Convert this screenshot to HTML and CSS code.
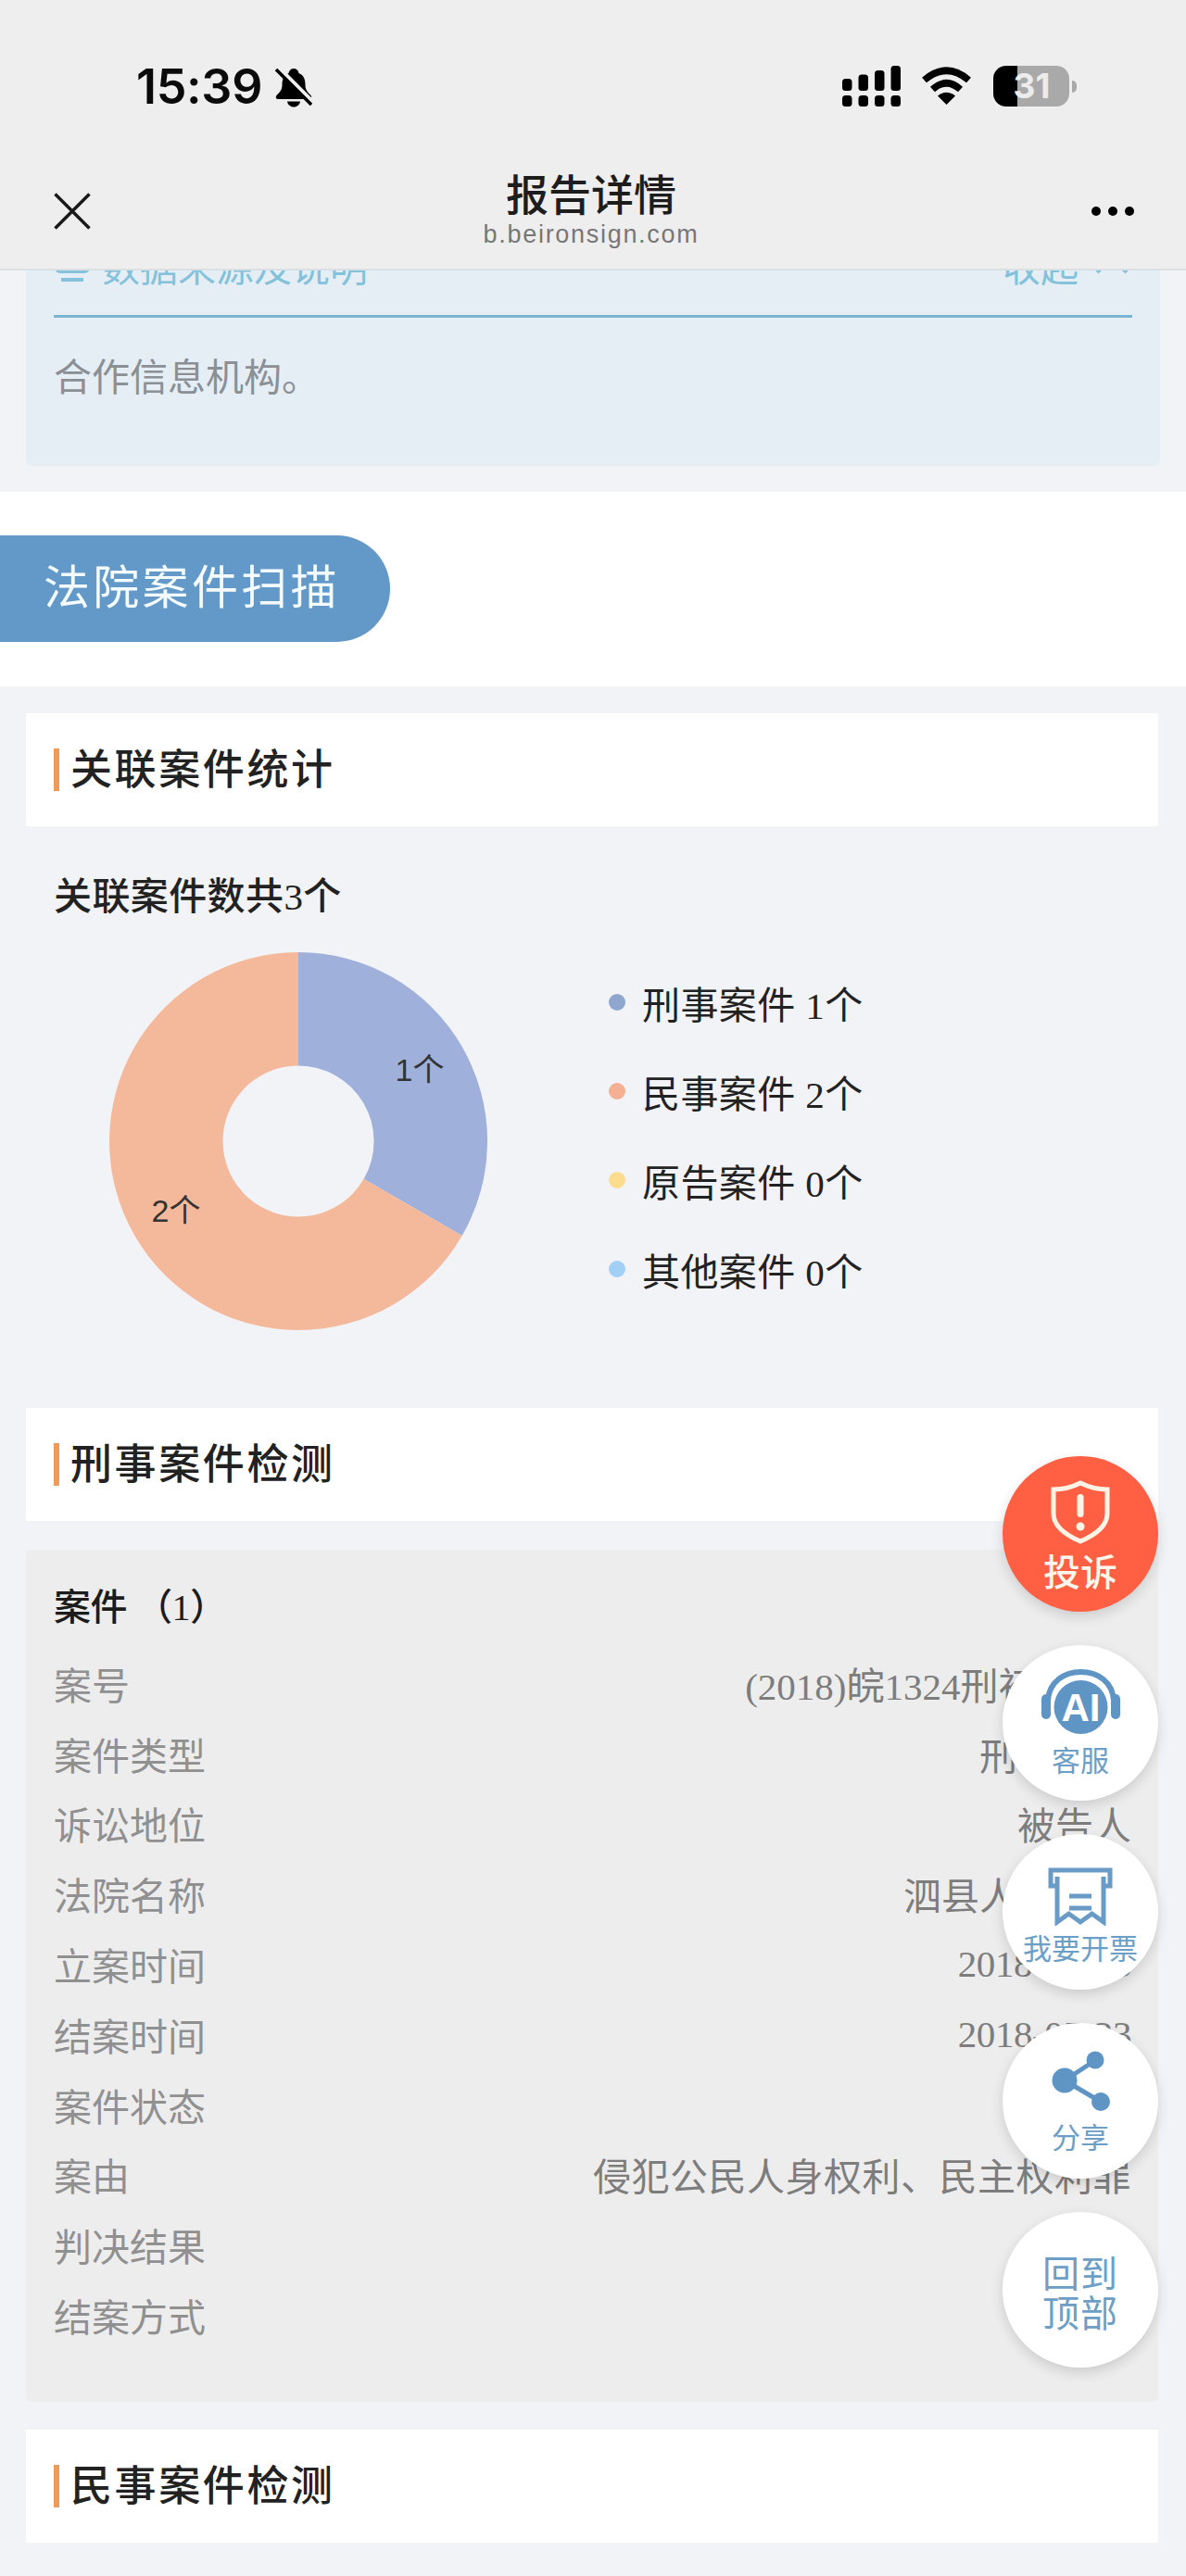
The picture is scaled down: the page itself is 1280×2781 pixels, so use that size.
FILE: index.html
```html
<!DOCTYPE html>
<html lang="zh-CN">
<head>
<meta charset="utf-8">
<title>报告详情</title>
<link rel="stylesheet" href="styles.css">
</head>
<body>
<div class="app">
  <header class="topbar">
    <div class="status">
      <div class="status-left">
        <span class="clock">15:39</span>
        <svg class="bell" viewBox="0 0 40 43" aria-hidden="true">
          <path class="ink" d="M20 1c-3 0-5 2-5.500 5C9 8 7.500 13 7.500 19c0 5-3 8-6 11-1.500 2-.5 4 2 4h33c2.500 0 3.500-2 2-4-3-3-6-6-6-11 0-6-1.500-11-7-13C25 3 23 1 20 1z"/>
          <path class="ink" d="M13 36.500h14c-.5 3.500-3.500 6-7 6s-6.500-2.500-7-6z"/>
          <path class="bell-gap" d="M4 0l37 37"/>
          <path class="bell-slash" d="M1 2l38 38"/>
        </svg>
      </div>
      <div class="status-right">
        <svg class="signal" viewBox="0 0 63 44" aria-hidden="true">
          <rect class="ink" x="0" y="14" width="10.500" height="13" rx="3.500"/>
          <rect class="ink" x="17.500" y="9.500" width="10.500" height="17.500" rx="3.500"/>
          <rect class="ink" x="35" y="5" width="10.500" height="22" rx="3.500"/>
          <rect class="ink" x="52.500" y="0" width="10.500" height="27" rx="3.500"/>
          <rect class="ink" x="0" y="32" width="10.500" height="12" rx="3.500"/>
          <rect class="ink" x="17.500" y="32" width="10.500" height="12" rx="3.500"/>
          <rect class="ink" x="35" y="32" width="10.500" height="12" rx="3.500"/>
          <rect class="ink" x="52.500" y="32" width="10.500" height="12" rx="3.500"/>
        </svg>
        <svg class="wifi" viewBox="0 0 55 41" aria-hidden="true">
          <path class="wifi-arc" d="M3.500 14.500Q27.500 -6 51.500 14.500"/>
          <path class="wifi-arc" d="M12.500 24.500Q27.500 11 42.500 24.500"/>
          <path class="ink" d="M27.500 41L18 31.500Q27.500 24 37 31.500Z"/>
        </svg>
        <div class="battery"><span class="battery-level">31</span><i class="battery-tip"></i></div>
      </div>
    </div>
    <div class="nav">
      <svg class="nav-close" viewBox="0 0 40 40" aria-hidden="true"><path d="M1.500 1.500l37 37M38.500 1.500l-37 37"/></svg>
      <div class="nav-title">
        <div class="nav-name">报告详情</div>
        <div class="nav-host">b.beironsign.com</div>
      </div>
      <svg class="nav-more" viewBox="0 0 48 12" aria-hidden="true">
        <circle class="ink" cx="6" cy="6" r="5"/><circle class="ink" cx="24" cy="6" r="5"/><circle class="ink" cx="42" cy="6" r="5"/>
      </svg>
    </div>
  </header>

  <main class="page">
    <section class="notice">
      <div class="notice-head">
        <div class="notice-label">
          <svg class="notice-icon" viewBox="0 0 40 44" aria-hidden="true"><rect x="3" y="3" width="34" height="26" rx="4"/><path d="M8 38h24"/></svg>
          <span>数据来源及说明</span>
        </div>
        <div class="notice-toggle">
          <span>收起</span>
          <svg class="notice-chevron" viewBox="0 0 36 24" aria-hidden="true"><path d="M2 20L18 4l16 16"/></svg>
        </div>
      </div>
      <p class="notice-body">合作信息机构。</p>
    </section>

    <div class="band"><h1 class="pill">法院案件扫描</h1></div>

    <h2 class="section-head">关联案件统计</h2>
    <p class="summary">关联案件数共3个</p>
    <div class="chart-row">
      <svg class="donut" viewBox="0 0 408 408" role="img">
        <path class="slice-blue" d="M204 0A204 204 0 0 1 380.700 306L274.600 244.750A81.500 81.500 0 0 0 204 122.500Z"/>
        <path class="slice-orange" d="M380.700 306A204 204 0 1 1 204 0L204 122.500A81.500 81.500 0 1 0 274.600 244.750Z"/>
        <text class="donut-label" x="335" y="139" text-anchor="middle">1个</text>
        <text class="donut-label" x="72" y="291" text-anchor="middle">2个</text>
      </svg>
      <ul class="legend">
        <li class="legend-item"><i class="dot dot-blue"></i>刑事案件 1个</li>
        <li class="legend-item"><i class="dot dot-orange"></i>民事案件 2个</li>
        <li class="legend-item"><i class="dot dot-yellow"></i>原告案件 0个</li>
        <li class="legend-item"><i class="dot dot-sky"></i>其他案件 0个</li>
      </ul>
    </div>

    <h2 class="section-head section-head-criminal">刑事案件检测</h2>
    <section class="case">
      <h3 class="case-title">案件 （1）</h3>
      <dl class="case-list">
        <div class="case-row"><dt>案号</dt><dd>(2018)皖1324刑初123号</dd></div>
        <div class="case-row"><dt>案件类型</dt><dd>刑事案件</dd></div>
        <div class="case-row"><dt>诉讼地位</dt><dd>被告人</dd></div>
        <div class="case-row"><dt>法院名称</dt><dd>泗县人民法院</dd></div>
        <div class="case-row"><dt>立案时间</dt><dd class="case-date">2018-03-13</dd></div>
        <div class="case-row"><dt>结案时间</dt><dd class="case-date">2018-05-23</dd></div>
        <div class="case-row"><dt>案件状态</dt><dd>已结案</dd></div>
        <div class="case-row"><dt>案由</dt><dd class="case-cause">侵犯公民人身权利、民主权利罪</dd></div>
        <div class="case-row"><dt>判决结果</dt><dd></dd></div>
        <div class="case-row"><dt>结案方式</dt><dd></dd></div>
      </dl>
    </section>

    <h2 class="section-head section-head-civil">民事案件检测</h2>
  </main>

  <nav class="fabs">
    <a class="fab fab-red">
      <svg class="fab-shield" viewBox="0 0 64 69" aria-hidden="true">
        <path class="shield-line" d="M32 3C22 8 12 10 3 10V36C3 50 18 60 32 66C46 60 61 50 61 36V10C52 10 42 8 32 3Z"/>
        <rect class="shield-mark" x="28.500" y="15" width="7" height="25" rx="3.500"/>
        <circle class="shield-mark" cx="32" cy="50" r="4.500"/>
      </svg>
      <span class="fab-label-lg">投诉</span>
    </a>
    <a class="fab">
      <svg class="fab-ai" viewBox="0 0 85 70" aria-hidden="true">
        <circle class="blue-fill" cx="42.500" cy="41" r="29"/>
        <path class="ai-band" d="M7 34C8 14 24 3 42.500 3S77 14 78 34"/>
        <rect class="blue-fill" x="0" y="27" width="10" height="27" rx="5"/>
        <rect class="blue-fill" x="75" y="27" width="10" height="27" rx="5"/>
        <text class="ai-text" x="42.500" y="56" text-anchor="middle">AI</text>
      </svg>
      <span class="fab-label">客服</span>
    </a>
    <a class="fab">
      <svg class="fab-receipt" viewBox="0 0 70 63" aria-hidden="true">
        <path class="blue-line" d="M10 20H3V3H67V20H60"/>
        <path class="blue-line" d="M10 10V59L22.500 50L35 59L47.500 50L60 59V10"/>
        <path class="blue-line" d="M23 31H47M23 44H47"/>
      </svg>
      <span class="fab-label">我要开票</span>
    </a>
    <a class="fab">
      <svg class="fab-share" viewBox="0 0 63 66" aria-hidden="true">
        <path class="share-link" d="M14 32L46 11M14 32L53 55"/>
        <circle class="blue-fill" cx="14" cy="32" r="13.500"/>
        <circle class="blue-fill" cx="47" cy="10" r="9.500"/>
        <circle class="blue-fill" cx="53" cy="55" r="10"/>
      </svg>
      <span class="fab-label">分享</span>
    </a>
    <a class="fab fab-top">回到<br>顶部</a>
  </nav>
</div>
</body>
</html>
```
FILE: styles.css
```css
* { box-sizing: border-box; }
html, body { margin: 0; padding: 0; }
body {
  width: 1280px;
  background: #f2f3f7;
  font-family: "Noto Sans CJK SC", "Noto Sans", sans-serif;
  color: #222;
}
h1, h2, h3, p, ul, dl, dd { margin: 0; padding: 0; }
ul { list-style: none; }
.ink { fill: #000; }

.app { position: relative; width: 1280px; height: 2781px; overflow: hidden; }

/* top bar */
.topbar {
  position: absolute;
  top: 0; left: 0; right: 0;
  z-index: 5;
  height: 292px;
  background: #eeeeee;
  border-bottom: 2px solid #d9dfe3;
}
.status {
  display: flex;
  justify-content: space-between;
  align-items: flex-start;
  height: 178px;
  padding: 71px 126px 0 147px;
}
.status-left { display: flex; align-items: center; gap: 14px; height: 46px; }
.clock {
  font-family: Inter, "Liberation Sans", sans-serif;
  font-size: 52px;
  font-weight: 600;
  line-height: 46px;
  letter-spacing: -0.3px;
  color: #0a0a0a;
}
.bell { width: 40px; height: 43px; }
.bell-gap { fill: none; stroke: #eeeeee; stroke-width: 4; }
.bell-slash { fill: none; stroke: #000; stroke-width: 3.5; }
.status-right { display: flex; align-items: flex-start; }
.signal { width: 63px; height: 44px; margin-right: 22px; }
.wifi { width: 55px; height: 41px; margin-top: 1px; margin-right: 23px; }
.wifi-arc { fill: none; stroke: #000; stroke-width: 7.5; }
.battery {
  position: relative;
  width: 82px;
  height: 44px;
  border-radius: 14px;
  background: linear-gradient(to right, #000 26px, #a9a9a9 26px);
  text-align: center;
}
.battery-level {
  display: block;
  padding-left: 1px;
  font-family: Inter, "Liberation Sans", sans-serif;
  font-size: 37px;
  font-weight: 700;
  line-height: 44px;
  color: #ececec;
}
.battery-tip {
  position: absolute;
  right: -8px;
  top: 16px;
  width: 5px;
  height: 13px;
  border-radius: 0 6px 6px 0;
  background: #a9a9a9;
}
.nav {
  display: flex;
  justify-content: space-between;
  align-items: flex-start;
  padding: 13px 55px 0 58px;
}
.nav-close { width: 40px; height: 40px; margin-top: 17px; }
.nav-close path { fill: none; stroke: #1a1a1a; stroke-width: 3.5; }
.nav-title { text-align: center; margin-left: 1px; margin-top: -10px; }
.nav-name { font-size: 46px; font-weight: 500; line-height: 52px; margin-bottom: 5px; color: #1d1d1d; }
.nav-host {
  font-family: "Liberation Sans", Arial, sans-serif;
  font-size: 27px;
  line-height: 30px;
  letter-spacing: 1.7px;
  color: #777;
}
.nav-more { width: 48px; height: 12px; margin-top: 31px; }

/* page flow */
.page { padding-top: 240px; }
.notice {
  height: 263px;
  margin: 0 28px;
  padding: 0 30px;
  background: #e6eef5;
  border-radius: 0 0 6px 6px;
}
.notice-head {
  display: flex;
  justify-content: space-between;
  align-items: center;
  height: 103px;
  padding-bottom: 8px;
  border-bottom: 3px solid #7ab4d1;
  color: #84c2db;
  font-size: 41px;
}
.notice-label { display: flex; align-items: center; gap: 12px; }
.notice-icon { width: 40px; height: 44px; }
.notice-icon rect, .notice-icon path { fill: none; stroke: #84c2db; stroke-width: 4; }
.notice-toggle { display: flex; align-items: center; gap: 18px; padding-right: 4px; }
.notice-chevron { width: 36px; height: 24px; }
.notice-chevron path { fill: none; stroke: #84c2db; stroke-width: 4; }
.notice-body {
  margin-top: 30px;
  font-size: 41px;
  line-height: 62px;
  color: #8a9095;
}

.band {
  height: 210px;
  margin-top: 28px;
  padding-top: 47px;
  background: #fff;
}
.pill {
  width: 421px;
  height: 115px;
  padding-left: 47px;
  border-radius: 0 58px 58px 0;
  background: #6299c8;
  color: #f4fbfd;
  font-size: 50px;
  font-weight: 400;
  line-height: 105px;
  letter-spacing: 3.3px;
}

.section-head {
  position: relative;
  height: 122px;
  margin: 29px 30px 0 28px;
  padding-left: 48px;
  background: #fff;
  font-size: 45px;
  font-weight: 500;
  line-height: 116px;
  letter-spacing: 2.6px;
  color: #222;
}
.section-head::before {
  content: "";
  position: absolute;
  left: 30px;
  top: 38px;
  width: 6px;
  height: 46px;
  background: #f09a55;
}
.section-head-criminal { margin-top: 84px; }
.section-head-civil { margin-top: 30px; }

.summary {
  padding: 46px 0 0 58px;
  font-family: "Liberation Serif", "Noto Sans CJK SC", serif;
  font-size: 41px;
  font-weight: 500;
  line-height: 60px;
  letter-spacing: 0.4px;
  color: #222;
}
.chart-row { display: flex; align-items: flex-start; margin-top: 30px; padding-left: 118px; }
.donut { width: 408px; height: 408px; flex: none; }
.slice-blue { fill: #9fb0da; }
.slice-orange { fill: #f4b89b; }
.donut-label {
  font-family: "Liberation Sans", "Noto Sans CJK SC", sans-serif;
  font-size: 34px;
  fill: #333;
}
.legend { margin: 6px 0 0 131px; }
.legend-item {
  display: flex;
  align-items: center;
  gap: 18px;
  height: 96px;
  font-family: "Liberation Serif", "Noto Sans CJK SC", serif;
  font-size: 41px;
  letter-spacing: 0.4px;
  white-space: pre;
  color: #222;
}
.dot { width: 18px; height: 18px; border-radius: 50%; flex: none; }
.dot-blue { background: #8fa6cf; }
.dot-orange { background: #f4b090; }
.dot-yellow { background: #fcdc8f; }
.dot-sky { background: #a0d0f5; }

.case {
  height: 920px;
  margin: 31px 30px 0 28px;
  padding: 24px 29px 0 30px;
  background: #ededee;
  border-radius: 6px;
}
.case-title {
  font-family: "Liberation Serif", "Noto Sans CJK SC", serif;
  font-size: 40px;
  font-weight: 500;
  line-height: 78px;
  letter-spacing: -0.6px;
  color: #1c1c1c;
}
.case-list { margin-top: 4px; }
.case-row {
  display: flex;
  justify-content: space-between;
  align-items: center;
  height: 75.800px;
  font-family: "Liberation Serif", "Noto Sans CJK SC", serif;
  font-size: 41px;
}
.case-row dt { color: #909090; }
.case-row dd { color: #7d7d7d; }
.case-row .case-date { letter-spacing: -0.4px; }
.case-row .case-cause { letter-spacing: 0.5px; }

/* floating buttons */
.fabs {
  position: absolute;
  top: 1572px;
  right: 30px;
  z-index: 4;
  display: flex;
  flex-direction: column;
  gap: 36px;
}
.fab {
  display: flex;
  flex-direction: column;
  align-items: center;
  width: 168px;
  height: 168px;
  border-radius: 50%;
  background: #fff;
  box-shadow: 0 5px 14px rgba(0, 0, 0, 0.14);
  color: #6c9ec6;
}
.fab-red { background: #ff6044; color: #fff6ec; }
.fab-label { font-size: 31px; line-height: 36px; white-space: nowrap; }
.fab-label-lg { margin-top: 8px; font-size: 40px; font-weight: 500; line-height: 40px; }
.fab-shield { width: 64px; height: 69px; margin-top: 26px; flex: none; }
.shield-line { fill: none; stroke: #fff3e6; stroke-width: 5; }
.shield-mark { fill: #fff3e6; }
.fab-ai { width: 85px; height: 70px; margin: 26px 0 9px; flex: none; }
.blue-fill { fill: #5f95c5; }
.ai-band { fill: none; stroke: #5f95c5; stroke-width: 6; }
.ai-text {
  font-family: "Liberation Sans", Arial, sans-serif;
  font-size: 42px;
  font-weight: 700;
  fill: #fff;
}
.fab-receipt { width: 70px; height: 63px; margin: 36px 0 5px; flex: none; }
.blue-line { fill: none; stroke: #6a9bc6; stroke-width: 5; }
.fab-share { width: 63px; height: 66px; margin: 30px 0 8px; flex: none; }
.share-link { fill: none; stroke: #5f95c5; stroke-width: 5; }
.fab-top {
  justify-content: center;
  padding-top: 3px;
  font-size: 40px;
  line-height: 43px;
  text-align: center;
  letter-spacing: 1px;
}
```
